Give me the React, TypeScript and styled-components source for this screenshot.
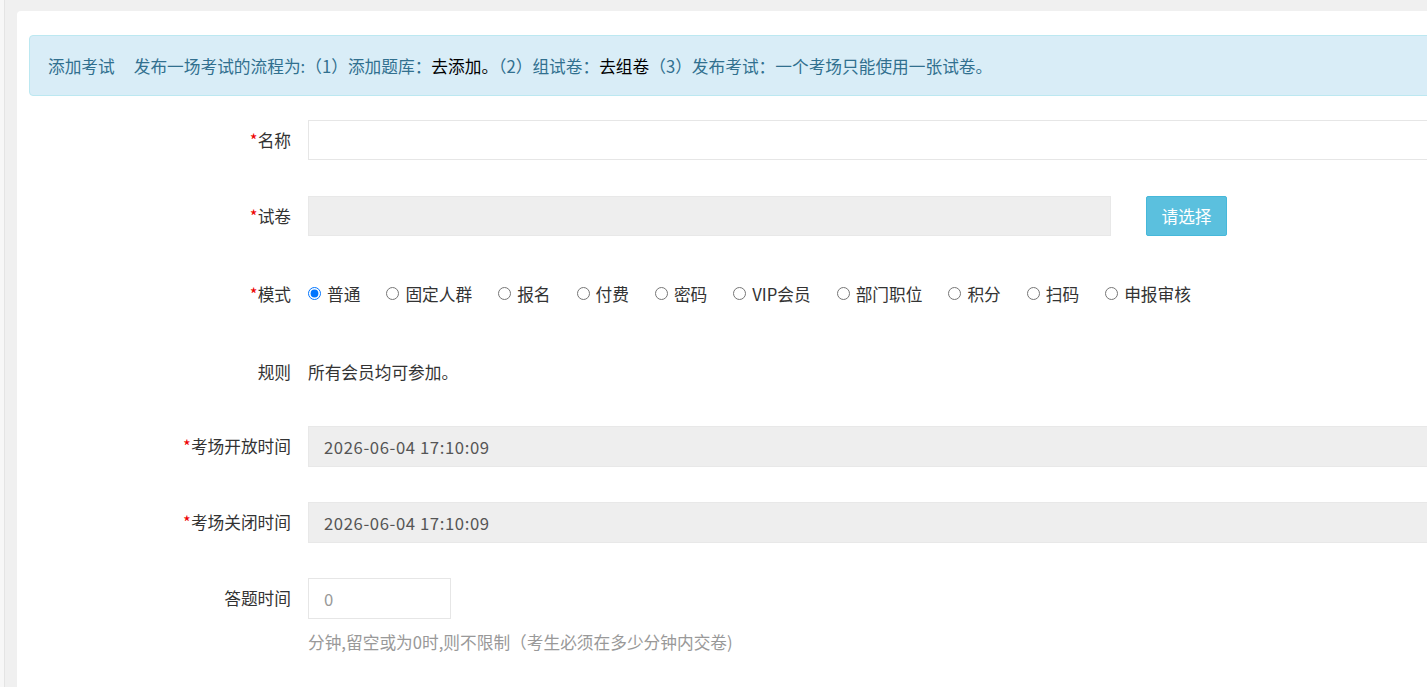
import React, { FunctionComponent } from 'react';
import styled, { createGlobalStyle } from 'styled-components';

const GlobalStyle = createGlobalStyle`
  html, body {
    margin: 0;
    background: #f0f0f0;
    overflow: hidden;
    font-family: "Microsoft YaHei", "Noto Sans CJK SC", "Noto Sans", sans-serif;
    font-size: 16.7px;
    color: #333;
  }
  * {
    box-sizing: border-box;
  }
`;

const Page = styled.div`
  display: flex;
  min-height: 100vh;
`;

const Edge = styled.div`
  width: 5px;
  flex-shrink: 0;
  background: #f7f7f7;
  border-right: 1px solid #e4e4e4;
`;

const Main = styled.div`
  flex: 1;
  padding: 11px 0 0 12px;
`;

const Panel = styled.div`
  width: 1520px;
  min-height: 700px;
  background: #fff;
  border-radius: 4px 0 0 0;
  padding: 24px 0 40px 12px;
`;

const Alert = styled.div`
  display: flex;
  align-items: center;
  height: 61px;
  padding: 0 18px;
  margin-bottom: 24px;
  background: #d9edf7;
  border: 1px solid #bce8f1;
  border-radius: 4px;
  color: #31708f;
  white-space: nowrap;
`;

const AlertTitle = styled.span`
  margin-right: 19px;
`;

const AlertLink = styled.a`
  color: #000;
  text-decoration: none;
`;

const Row = styled.div<{ readonly offset?: number; readonly space?: number }>`
  display: flex;
  align-items: flex-start;
  padding-top: ${({ offset }) => offset || 0}px;
  margin-bottom: ${({ space }) => space ?? 36}px;
`;

const Label = styled.label`
  width: 262px;
  flex-shrink: 0;
  margin-right: 17px;
  text-align: right;
  line-height: 40px;
  color: #333;
`;

const Star = styled.span`
  color: #e00;
`;

const Field = styled.div`
  display: flex;
  flex-direction: column;
`;

const Input = styled.input<{ readonly w: number; readonly h?: number; readonly readOnlyLook?: boolean }>`
  width: ${({ w }) => w}px;
  height: ${({ h }) => h || 40}px;
  padding: 0 15px;
  font: inherit;
  letter-spacing: 0.6px;
  color: #555;
  background: ${({ readOnlyLook }) => (readOnlyLook ? '#eee' : '#fff')};
  border: 1px solid ${({ readOnlyLook }) => (readOnlyLook ? '#e8e8e8' : '#e6e6e6')};
  border-radius: 0;
  outline: none;
  &::placeholder {
    color: #999;
  }
`;

const SelectButton = styled.button`
  height: 40px;
  width: 81px;
  margin-left: 35px;
  padding: 0;
  font: inherit;
  color: #fff;
  background: #5bc0de;
  border: 1px solid #46b8da;
  border-radius: 2px;
  cursor: pointer;
`;

const RadioGroup = styled.div`
  display: flex;
  align-items: center;
  height: 40px;
  gap: 26px;
`;

const RadioItem = styled.label`
  display: flex;
  align-items: center;
  color: #333;
  input {
    width: 13px;
    height: 13px;
    margin: -2px 6px 0 0;
  }
`;

const Static = styled.div`
  line-height: 40px;
  color: #333;
`;

const Help = styled.div`
  margin-top: 12px;
  line-height: 22px;
  color: #999;
`;

const modes = ['普通', '固定人群', '报名', '付费', '密码', 'VIP会员', '部门职位', '积分', '扫码', '申报审核'];

const App: FunctionComponent = () => (
  <>
    <GlobalStyle />
    <Page>
      <Edge />
      <Main>
        <Panel>
          <Alert>
            <AlertTitle>添加考试</AlertTitle>
            <span>
              发布一场考试的流程为:（1）添加题库：<AlertLink href="#">去添加。</AlertLink>（2）组试卷：
              <AlertLink href="#">去组卷</AlertLink>（3）发布考试：一个考场只能使用一张试卷。
            </span>
          </Alert>

          <Row>
            <Label>
              <Star>*</Star>名称
            </Label>
            <Input w={1200} />
          </Row>

          <Row>
            <Label>
              <Star>*</Star>试卷
            </Label>
            <Input w={803} readOnlyLook readOnly />
            <SelectButton>请选择</SelectButton>
          </Row>

          <Row offset={2} space={35}>
            <Label>
              <Star>*</Star>模式
            </Label>
            <RadioGroup>
              {modes.map((m, i) => (
                <RadioItem key={m}>
                  <input type="radio" name="mode" defaultChecked={i === 0} />
                  {m}
                </RadioItem>
              ))}
            </RadioGroup>
          </Row>

          <Row offset={3} space={34}>
            <Label>规则</Label>
            <Static>所有会员均可参加。</Static>
          </Row>

          <Row space={35}>
            <Label>
              <Star>*</Star>考场开放时间
            </Label>
            <Input w={1200} h={41} readOnlyLook readOnly defaultValue="2026-06-04 17:10:09" />
          </Row>

          <Row space={35}>
            <Label>
              <Star>*</Star>考场关闭时间
            </Label>
            <Input w={1200} h={41} readOnlyLook readOnly defaultValue="2026-06-04 17:10:09" />
          </Row>

          <Row>
            <Label>答题时间</Label>
            <Field>
              <Input w={143} h={41} placeholder="0" />
              <Help>分钟,留空或为0时,则不限制（考生必须在多少分钟内交卷)</Help>
            </Field>
          </Row>
        </Panel>
      </Main>
    </Page>
  </>
);

export default App;
